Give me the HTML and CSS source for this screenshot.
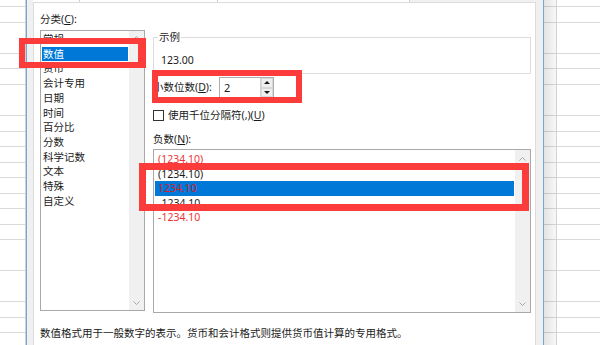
FILE: index.html
```html
<!DOCTYPE html>
<html>
<head>
	<meta charset="utf-8">
	<title>设置单元格格式 - 数字</title>
	<link rel="stylesheet" href="styles.css">
</head>
<body>
	<div class="screen">

		<!-- Sheet behind the dialog, left side -->
		<div class="sheet sheet-left"></div>

		<!-- Format cells dialog -->
		<div class="dialog">
			<div class="tabs">
				<span class="tab tab-1"></span>
				<span class="tab tab-2"></span>
				<span class="tab tab-3"></span>
			</div>

			<div class="panel">
				<div class="cols">

					<!-- Category column -->
					<div class="col-left">
						<div class="label">分类(<u>C</u>):</div>
						<div class="listbox cat-list">
							<ul class="items">
								<li>常规</li>
								<li class="selected">数值</li>
								<li>货币</li>
								<li>会计专用</li>
								<li>日期</li>
								<li>时间</li>
								<li>百分比</li>
								<li>分数</li>
								<li>科学记数</li>
								<li>文本</li>
								<li>特殊</li>
								<li>自定义</li>
							</ul>
							<div class="scrollbar">
								<svg width="7" height="4" viewBox="0 0 7 4"><polyline points="0.5,3.5 3.5,0.5 6.5,3.5" /></svg>
								<svg width="7" height="4" viewBox="0 0 7 4"><polyline points="0.5,0.5 3.5,3.5 6.5,0.5" /></svg>
							</div>
						</div>
					</div>

					<!-- Options column -->
					<div class="col-right">
						<fieldset class="sample">
							<legend>示例</legend>
							<div class="sample-value">123.00</div>
						</fieldset>

						<div class="decimals">
							<label class="decimals-label">小数位数(<u>D</u>):</label>
							<div class="spin">
								<span class="spin-value">2</span>
								<div class="spin-btns">
									<span class="spin-btn"><i class="tri tri-up"></i></span>
									<span class="spin-btn"><i class="tri tri-down"></i></span>
								</div>
							</div>
						</div>

						<div class="check-row">
							<span class="checkbox"></span>
							<span>使用千位分隔符(,)(<u>U</u>)</span>
						</div>

						<div class="label neg-label">负数(<u>N</u>):</div>
						<div class="listbox neg-list">
							<ul class="items">
								<li class="red">(1234.10)</li>
								<li>(1234.10)</li>
								<li class="red selected">1234.10</li>
								<li>-1234.10</li>
								<li class="red">-1234.10</li>
							</ul>
							<div class="scrollbar">
								<svg width="7" height="4" viewBox="0 0 7 4"><polyline points="0.5,3.5 3.5,0.5 6.5,3.5" /></svg>
								<svg width="7" height="4" viewBox="0 0 7 4"><polyline points="0.5,0.5 3.5,3.5 6.5,0.5" /></svg>
							</div>
						</div>
					</div>

				</div>

				<p class="desc">数值格式用于一般数字的表示。货币和会计格式则提供货币值计算的专用格式。</p>
			</div>
		</div>

		<!-- Sheet behind the dialog, right side -->
		<div class="sheet sheet-right"></div>

		<!-- Red annotation boxes drawn over the screenshot -->
		<div class="mark mark-category"></div>
		<div class="mark mark-decimals"></div>
		<div class="mark mark-negative"></div>
	</div>
</body>
</html>
```

FILE: styles.css
```css
/* Page reset */
body {
	margin: 0;
	width: 600px;
	height: 345px;
	overflow: hidden;
	font-family: "Noto Sans", "Noto Sans CJK SC", sans-serif;
	font-size: 10.5px;
	color: #1a1a1a;
}

ul {
	list-style: none;
	margin: 0;
	padding: 0;
}

u {
	text-decoration: underline;
	text-underline-offset: 1px;
}

/* Whole screenshot */
.screen {
	position: relative;
	display: flex;
	width: 600px;
	height: 345px;
}

/* Spreadsheet cells behind the dialog */
.sheet {
	background-color: #fff;
	background-image: repeating-linear-gradient(to bottom, transparent 0 6.5px, #d9d9d9 6.5px 7.5px, transparent 7.5px 15.5px);
}

.sheet-left {
	width: 25px;
	border-right: 1px solid #d0d0d0;
}

.sheet-right {
	flex: 1;
	background-image:
		linear-gradient(to right, rgba(0, 0, 0, 0.11), rgba(0, 0, 0, 0.03) 12px, transparent 12px),
		linear-gradient(to right, transparent 12px, #d2d2d2 12px 13px, transparent 13px),
		repeating-linear-gradient(to bottom, transparent 0 6.5px, #d9d9d9 6.5px 7.5px, transparent 7.5px 15.5px);
}

/* Dialog frame */
.dialog {
	display: flex;
	flex-direction: column;
	width: 518px;
	box-sizing: border-box;
	background-color: #f0f0f0;
	border-left: 1px solid #72a7d9;
	border-right: 1px solid #72a7d9;
	padding: 0 7px 0 6px;
}

/* Bottom of the tab headers */
.tabs {
	display: flex;
	height: 2px;
}

.tab {
	background-color: #fff;
	border-right: 1px solid #d0d0d0;
}

.tab-1 { width: 46px; }
.tab-2 { width: 137px; }
.tab-3 { width: 191px; }

/* White tab page */
.panel {
	flex: 1;
	background-color: #fff;
	border: 1px solid #dcdcdc;
	border-bottom: none;
	padding: 9px 4px 0 6px;
}

.cols {
	display: flex;
	gap: 8px;
}

.label {
	line-height: 15px;
}

/* Category column */
.col-left {
	width: 105px;
}

.listbox {
	display: flex;
	box-sizing: border-box;
	border: 1px solid #a9a9a9;
	background-color: #fff;
}

.cat-list {
	margin-top: 3px;
	height: 281px;
}

.listbox .items {
	flex: 1;
	padding-top: 1px;
}

.listbox li {
	margin: 0 1px;
	padding-left: 1px;
	line-height: 14.7px;
	white-space: nowrap;
}

.listbox li.selected {
	background-color: #0078d7;
	color: #fff;
}

.scrollbar {
	width: 15px;
	display: flex;
	flex-direction: column;
	justify-content: space-between;
	align-items: center;
	padding: 5px 0;
	background-color: #f0f0f0;
}

.scrollbar polyline {
	fill: none;
	stroke: #a8a8a8;
	stroke-width: 1;
}

/* Options column */
.col-right {
	flex: 1;
}

.sample {
	margin: 18px 0 0;
	padding: 0 0 0 4px;
	border: 1px solid #dcdcdc;
}

.sample legend {
	padding: 0 1px;
	line-height: 15px;
}

.sample-value {
	padding: 8px 0 5px 3px;
	line-height: 15px;
}

.decimals {
	display: flex;
	align-items: center;
	margin-top: 3px;
}

.decimals-label {
	width: 66px;
	line-height: 15px;
}

.spin {
	display: flex;
	width: 55px;
	height: 21px;
	box-sizing: border-box;
	border: 1px solid #abadb3;
}

.spin-value {
	flex: 1;
	padding-left: 4px;
	line-height: 19px;
	font-size: 11px;
}

.spin-btns {
	display: flex;
	flex-direction: column;
	width: 12px;
	border-left: 1px solid #d4d4d4;
}

.spin-btn {
	flex: 1;
	display: flex;
	align-items: center;
	justify-content: center;
	background-color: #efefef;
	border: 1px solid #d9d9d9;
}

.tri {
	width: 0;
	height: 0;
	border-left: 3px solid transparent;
	border-right: 3px solid transparent;
}

.tri-up {
	border-bottom: 3px solid #1a1a1a;
}

.tri-down {
	border-top: 3px solid #1a1a1a;
}

.check-row {
	display: flex;
	align-items: center;
	margin-top: 10px;
	line-height: 15px;
}

.checkbox {
	width: 11px;
	height: 11px;
	box-sizing: border-box;
	border: 1px solid #333;
	margin-right: 4px;
}

.neg-label {
	margin-top: 9px;
}

.neg-list {
	margin-top: 2px;
	height: 164px;
}

.neg-list .items {
	padding-top: 2px;
}

.neg-list li {
	padding-left: 3px;
	line-height: 14.6px;
}

.neg-list li.red {
	color: #ee3434;
}

.neg-list li.red.selected {
	color: #d41c2c;
}

.neg-list .scrollbar {
	padding: 7px 0 6px;
}

/* Description under the lists */
.desc {
	margin: 13px 0 0;
	line-height: 15px;
}

/* Red annotation rectangles */
.mark {
	position: absolute;
	box-sizing: border-box;
	border: 6px solid #fc3b3b;
}

.mark-category {
	left: 19px;
	top: 38px;
	width: 127px;
	height: 30px;
	border-right-width: 8px;
}

.mark-decimals {
	left: 152px;
	top: 70px;
	width: 150px;
	height: 33px;
}

.mark-negative {
	left: 139px;
	top: 163px;
	width: 390px;
	height: 48px;
	border-width: 7px;
}
```
